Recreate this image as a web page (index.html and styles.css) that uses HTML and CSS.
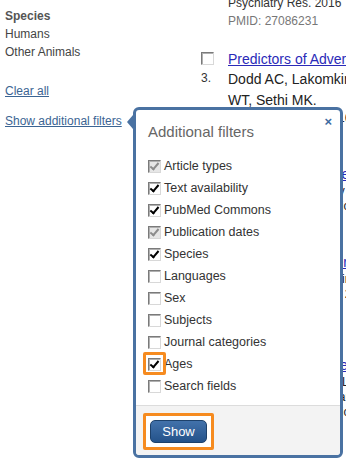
FILE: index.html
```html
<!DOCTYPE html>
<html lang="en">
<head>
  <meta charset="UTF-8" />
  <meta name="viewport" content="width=device-width, initial-scale=1.0" />
  <title>Additional filters</title>
  <link rel="stylesheet" href="styles.css">
</head>
<body>
  <div id="page">
    <div id="sidebar">
      <div class="facet-title">Species</div>
      <div class="facet-item">Humans</div>
      <div class="facet-item">Other Animals</div>
      <a class="side-link clear-link" href="#">Clear all</a>
      <a class="side-link" href="#">Show additional filters</a>
    </div>

    <div id="results">
      <div class="cite">Psychiatry Res. 2016</div>
      <div class="pmid">PMID: 27086231</div>

      <div class="result">
        <div class="result-num">
          <span class="cb"></span>
          <span>3.</span>
        </div>
        <div class="result-body">
          <a class="result-title" href="#">Predictors of Adverse Events After Fracture Surgery</a>
          <div class="authors">Dodd AC, Lakomkin N, Attum B, Bulka C, Obremskey<br>WT, Sethi MK.</div>
          <div class="small">J Orthop Trauma. 2016 May;30(5):e155-60.</div>
          <div class="small pmid-line">PMID: 27052310</div>
        </div>
      </div>

      <div class="result">
        <div class="result-num"></div>
        <div class="result-body">
          <a class="result-title" href="#">Obesity in orthopaedic trauma surgery patients and outcomes</a>
          <div class="small">Sethi MK, Obremskey WT, Jahangir AA, Lakomkin N, Dodd AC, Mir H</div>
          <div class="small">Journal of Orthopaedic Trauma. 2016 Apr;30(4):desc-190</div>
          <div class="small pmid-line">PMID: 27010312</div>
        </div>
      </div>

      <div class="result">
        <div class="result-num"></div>
        <div class="result-body">
          <a class="result-title" href="#">Complications after surgical fixation of hip fractures in the elderly</a>
          <div class="small">Sethi MK, Attum B, Mir H, Dodd AC, Lakomkin N, Jahangir AA, Obremskey</div>
          <div class="small">Medicine (Baltimore). 2016 Mar;95(12):e3012.</div>
          <div class="small pmid-line">PMID: 27010290</div>
          <div class="small pmid-line">Similar articles</div>
        </div>
      </div>

      <div class="result">
        <div class="result-num"></div>
        <div class="result-body">
          <a class="result-title" href="#">Early postoperative events after open reduction internal fixation</a>
          <div class="small">Evans AR, Dodd AC, Lakomkin N, Sethi MK, Obremskey WT, Mir H</div>
          <div class="small">Eur J Orthop Surg Traumatol. 2016 Feb;26(2):123-130.</div>
          <div class="small">Journal of Orthopaedic Surgery: 2016 volume 24 issue 1</div>
        </div>
      </div>
    </div>
  </div>

  <div id="filter-popup">
    <span class="popup-arrow"></span>
    <a class="popup-close" href="#">&times;</a>
    <h2>Additional filters</h2>
    <ul class="filter-list">
      <li><span class="cb checked disabled"></span>Article types</li>
      <li><span class="cb checked"></span>Text availability</li>
      <li><span class="cb checked"></span>PubMed Commons</li>
      <li><span class="cb checked disabled"></span>Publication dates</li>
      <li><span class="cb checked"></span>Species</li>
      <li><span class="cb"></span>Languages</li>
      <li><span class="cb"></span>Sex</li>
      <li><span class="cb"></span>Subjects</li>
      <li><span class="cb"></span>Journal categories</li>
      <li><span class="cb checked"></span>Ages<span class="hl-mark"></span></li>
      <li><span class="cb"></span>Search fields</li>
    </ul>
    <div class="popup-footer">
      <span class="hl-btn"><button class="show-btn">Show</button></span>
    </div>
  </div>
</body>
</html>
```

FILE: styles.css
```css
body {
  font-family: "Liberation Sans", Arial, sans-serif;
  margin: 0;
  background: #ffffff;
  color: #333;
  width: 346px;
  height: 462px;
  overflow: hidden;
  position: relative;
}
#page {
  display: flex;
}
#sidebar {
  width: 196px;
  flex-shrink: 0;
  padding: 7px 0 0 5px;
  box-sizing: border-box;
  font-size: 12px;
  line-height: 18px;
}
.facet-title {
  font-weight: bold;
  color: #555;
}
.facet-item {
  color: #444;
}
.side-link {
  display: block;
  color: #3b6493;
  text-decoration: underline;
  margin-top: 12px;
}
.clear-link {
  margin-top: 21px;
}
#results {
  width: 400px;
  flex-shrink: 0;
  margin-top: -6px;
}
.cite {
  margin-left: 32px;
  font-size: 12px;
  line-height: 18px;
  color: #333;
}
.pmid {
  margin-left: 32px;
  font-size: 12px;
  line-height: 18px;
  color: #777;
}
.result {
  display: flex;
  margin-top: 23px;
}
.result:first-of-type,
.pmid + .result {
  margin-top: 19px;
}
.result-num {
  width: 32px;
  flex-shrink: 0;
  display: flex;
  flex-direction: column;
  gap: 6px;
  font-size: 12px;
  color: #333;
  padding-top: 3px;
  padding-left: 5px;
  box-sizing: border-box;
}
.result-body {
  width: 360px;
  font-size: 14px;
  line-height: 21px;
  white-space: nowrap;
}
.result-title {
  display: block;
  color: #2a2ab8;
  text-decoration: underline;
  font-size: 14px;
  line-height: 20px;
}
.authors {
  color: #222;
}
.small {
  font-size: 12px;
  line-height: 15px;
  color: #222;
}
.pmid-line {
  color: #777;
}
.cb {
  display: inline-block;
  flex-shrink: 0;
  width: 13px;
  height: 13px;
  box-sizing: border-box;
  border: 1px solid;
  border-color: #7a7a7a #d8d8d8 #d8d8d8 #7a7a7a;
  background: #ffffff;
  box-shadow: inset 1px 1px 0 #b0b0b0;
  position: relative;
  vertical-align: middle;
}
.cb.checked::after {
  content: "";
  position: absolute;
  left: 3px;
  top: 0px;
  width: 3px;
  height: 7px;
  border: solid #000;
  border-width: 0 2px 2px 0;
  transform: rotate(40deg);
}
.cb.disabled {
  background: #e6e6e6;
}
.cb.disabled::after {
  border-color: #8c8c8c;
}
#filter-popup {
  position: absolute;
  left: 133px;
  top: 107px;
  width: 210px;
  height: 351px;
  box-sizing: border-box;
  border: 3px solid #4a72a2;
  border-radius: 6px;
  background: #ffffff;
  display: flex;
  flex-direction: column;
}
.popup-arrow {
  position: absolute;
  left: -9px;
  top: 5px;
  width: 0;
  height: 0;
  border-top: 7px solid transparent;
  border-bottom: 7px solid transparent;
  border-right: 6px solid #4a72a2;
}
.popup-close {
  position: absolute;
  right: 8px;
  top: 4px;
  color: #3d6aa0;
  font-weight: bold;
  font-size: 13px;
  text-decoration: none;
}
#filter-popup h2 {
  font-weight: normal;
  font-size: 15px;
  color: #666;
  margin: 13px 0 0 12px;
  line-height: 18px;
}
.filter-list {
  list-style: none;
  margin: 14px 0 0 12px;
  padding: 0;
  font-size: 12.5px;
  color: #333;
  flex: 1;
}
.filter-list li {
  display: flex;
  align-items: center;
  height: 22px;
  gap: 3px;
  position: relative;
}
.hl-mark {
  position: absolute;
  left: -5px;
  top: -1px;
  width: 23px;
  height: 23px;
  box-sizing: border-box;
  border: 3px solid #f68b1f;
  border-radius: 2px;
}
.popup-footer {
  background: #f3f3f3;
  border-top: 1px solid #dcdcdc;
  height: 50px;
  padding: 7px 0 0 7px;
  box-sizing: border-box;
  border-radius: 0 0 4px 4px;
}
.hl-btn {
  display: inline-flex;
  border: 3px solid #f68b1f;
  border-radius: 2px;
  padding: 4px;
  background: #fff;
}
.show-btn {
  width: 57px;
  height: 23px;
  border: 1px solid #1d416b;
  border-radius: 5px;
  background: linear-gradient(#4272ab, #24528a);
  color: #ffffff;
  font-family: "Liberation Sans", Arial, sans-serif;
  font-size: 13px;
  padding: 0;
}
```
